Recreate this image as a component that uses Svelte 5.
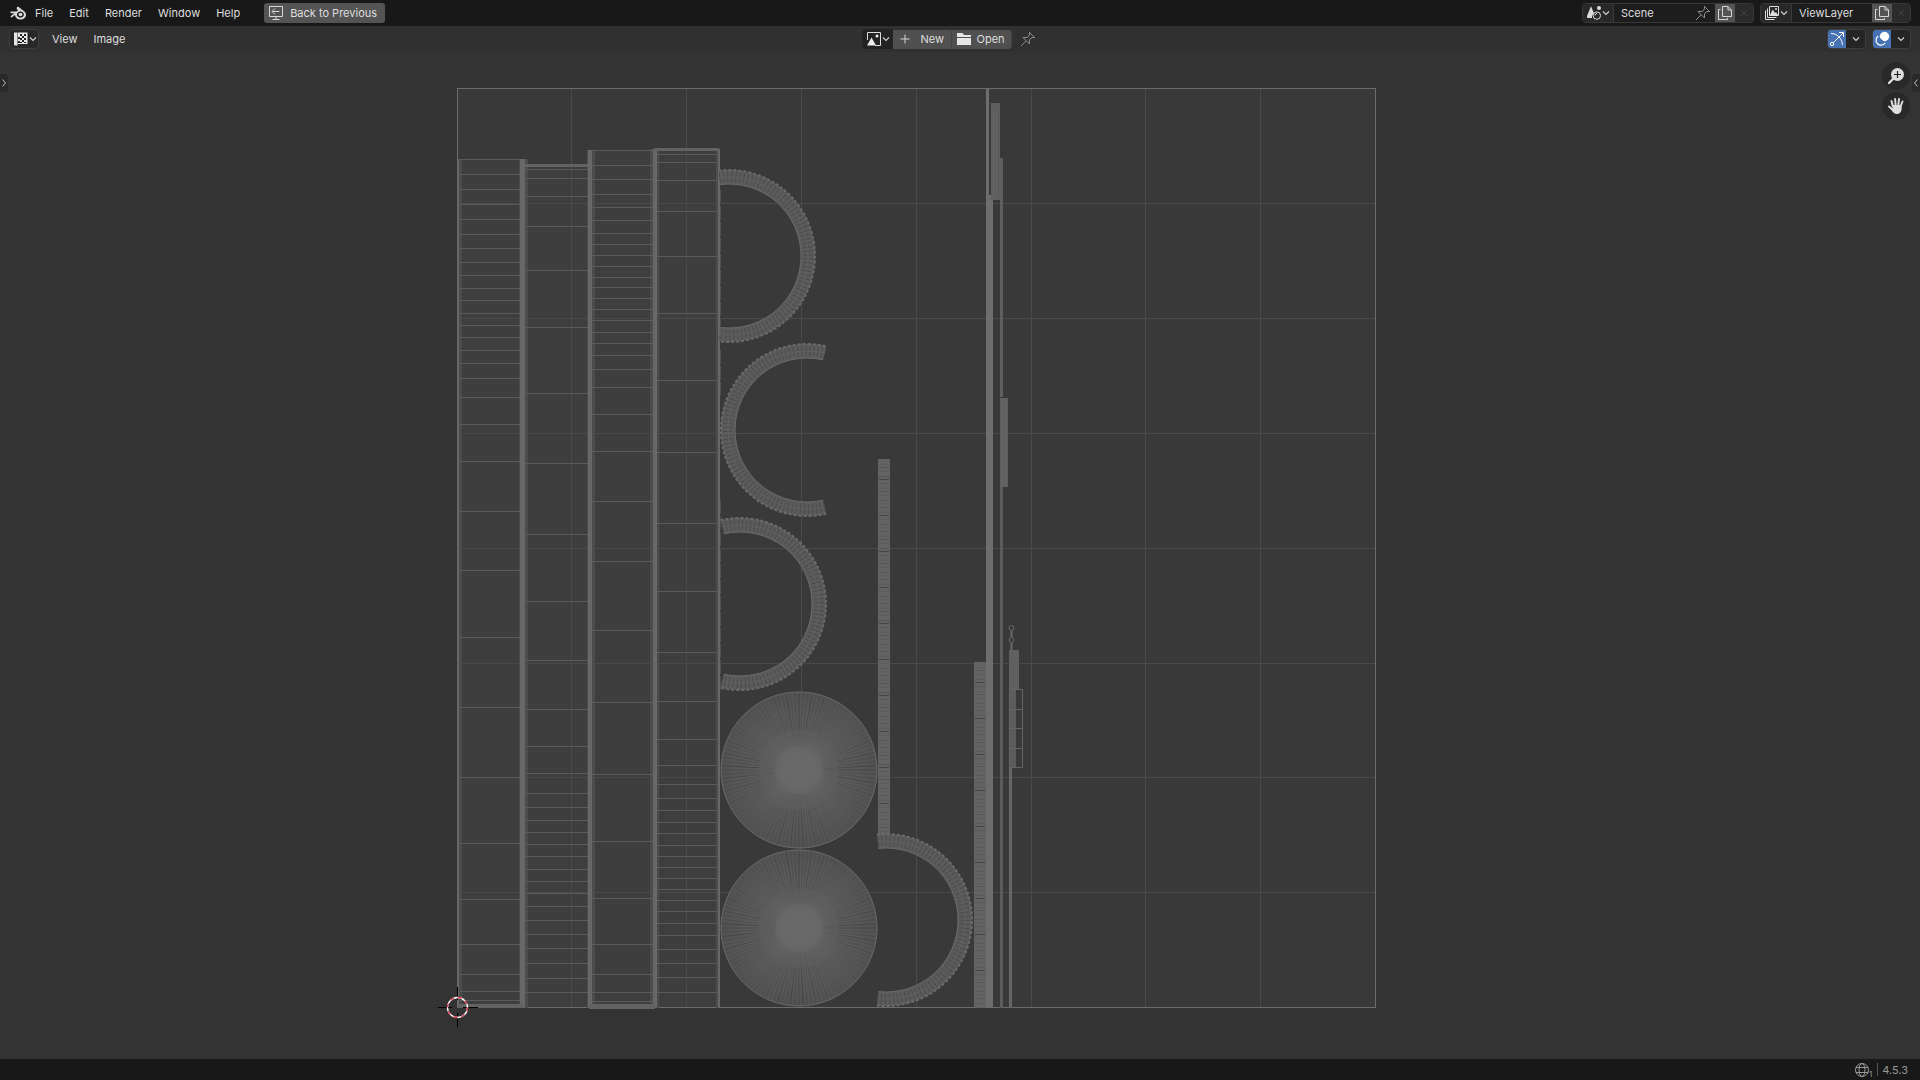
<script>
  const menus = ['File', 'Edit', 'Render', 'Window', 'Help'];

  const gridX = [571, 686, 801, 916, 1031, 1145, 1260];
  const gridY = [203, 318, 433, 548, 663, 777, 892];

  // Unwrapped wall strips with their horizontal edge loops.
  const strips = [
    { x: 458, w: 65, top: 159, rows: [159, 174, 189, 204, 219, 234, 248, 262, 275, 288, 300, 313, 325, 337, 350, 363, 378, 397, 424, 461, 511, 570, 637, 707, 777, 843, 899, 944, 974, 991, 1000] },
    { x: 521, w: 68, top: 164, rows: [169, 178, 196, 226, 270, 327, 393, 463, 534, 601, 660, 709, 746, 773, 793, 807, 820, 832, 844, 856, 869, 881, 893, 906, 920, 934, 948, 963, 978, 992] },
    { x: 589, w: 66, top: 150, rows: [150, 165, 179, 194, 207, 220, 233, 244, 255, 266, 277, 287, 298, 309, 320, 332, 343, 355, 369, 387, 414, 451, 501, 561, 630, 702, 774, 841, 898, 944, 974, 992, 1001] },
    { x: 654, w: 65, top: 149, rows: [154, 162, 180, 211, 256, 313, 380, 452, 523, 591, 652, 701, 739, 765, 784, 798, 810, 822, 833, 845, 856, 867, 878, 889, 900, 911, 923, 935, 949, 963, 977, 992] }
  ];

  // Vertical seams: soft band and bright core.
  const seams = [
    { x: 457, w: 5, y: 159, core: 457, coreW: 2 },
    { x: 519, w: 9, y: 159, core: 520, coreW: 5 },
    { x: 587, w: 8, y: 150, core: 588, coreW: 4 },
    { x: 650, w: 9, y: 149, core: 653, coreW: 4 },
    { x: 716, w: 4, y: 149, core: 718, coreW: 2 }
  ];

  const arcs = [
    { cx: 729, cy: 256, from: -97, to: 97 },
    { cx: 807, cy: 430, from: 77, to: 283 },
    { cx: 740, cy: 604, from: -103, to: 103 },
    { cx: 886, cy: 920, from: -96, to: 96 }
  ];

  function arcPath(a, r) {
    const f = (a.from * Math.PI) / 180;
    const t = (a.to * Math.PI) / 180;
    return `M${a.cx + r * Math.cos(f)} ${a.cy + r * Math.sin(f)}A${r} ${r} 0 1 1 ${a.cx + r * Math.cos(t)} ${a.cy + r * Math.sin(t)}`;
  }

  const discs = [{ cx: 799, cy: 770 }, { cx: 799, cy: 928 }];
  const spokes = Array.from({ length: 112 }, (_, i) => {
    const a = (i / 112) * Math.PI * 2;
    const near = Math.min(Math.abs(Math.sin(a)), Math.abs(Math.cos(a)));
    return { x: Math.cos(a), y: Math.sin(a), o: (0.5 - near * 0.5) * (i % 3 ? 0.6 : 1) };
  });

  function rungs(from, to) {
    const out = [];
    for (let y = from, i = 0; y < to; i++) {
      out.push({ y, dark: i % 9 === 4, bright: i % 2 === 1 });
      y += 3 + ((i * 7) % 3);
    }
    return out;
  }
  const ladders = [
    { x: 878, w: 12, y: 459, h: 375, rows: rungs(464, 832) },
    { x: 974, w: 12, y: 662, h: 346, rows: rungs(667, 1005) }
  ];

  let scene = $state('Scene');
  let layer = $state('ViewLayer');
</script>

{#snippet chevron()}
  <svg class="chev" viewBox="0 0 8 8" width="8" height="8" aria-hidden="true"><path d="M1 2.5 4 5.5 7 2.5" /></svg>
{/snippet}

{#snippet pin()}
  <svg class="line" viewBox="0 0 16 16" width="16" height="16" aria-hidden="true">
    <path d="M9 1 15 7M9.800 1.800 9 5 7 6.500 3 6.500 9.500 13 9.500 9 11 7 14.200 6.200M6 10 1 15" />
  </svg>
{/snippet}

{#snippet copy()}
  <svg class="line bright" viewBox="0 0 16 16" width="16" height="16" aria-hidden="true">
    <path d="M5.5 1.5H11L14.5 5V11.5H5.5ZM11 1.5V5H14.5M3.5 4.5H1.5V14.5H10.5V13" />
  </svg>
{/snippet}

{#snippet cross()}
  <svg class="line" viewBox="0 0 16 16" width="16" height="16" aria-hidden="true"><path d="M5 5 11 11M11 5 5 11" /></svg>
{/snippet}

<div class="app">
  <header class="topbar">
    <nav class="menus">
      <button class="logo" aria-label="Blender">
        <svg viewBox="0 0 16 14" width="16" height="14" aria-hidden="true">
          <path fill="#d8d8d8" fill-rule="evenodd" d="M7 1.2C7.5.7 8.2.7 8.7 1.1L13.8 5.1C15.2 6.2 16 7.3 16 8.8 16 11.7 13.5 13.6 10.4 13.6 7.3 13.6 5.1 11.6 4.9 9.1L2 11.2C1.2 11.8.1 10.9.9 10.1L4.3 7.2H1.1C0 7.2 0 5.6 1.1 5.6H6.2L8 4.4 6.9 3.1C6.5 2.5 6.5 1.7 7 1.2ZM10.4 5.5C8.4 5.5 6.9 6.9 6.9 8.6S8.4 11.7 10.4 11.7 13.9 10.3 13.9 8.6 12.4 5.5 10.4 5.5Z" />
          <ellipse cx="10.5" cy="8.5" rx="2" ry="1.8" fill="#d8d8d8" />
        </svg>
      </button>
      {#each menus as m}<button class="menu">{m}</button>{/each}
      <button class="back">
        <svg class="line bright" viewBox="0 0 16 16" width="16" height="16" aria-hidden="true">
          <path d="M1.5 1.5H14.5V11.5H1.5ZM8 11.5V14.5M4.5 14.5H11.5M11.5 6.5H4.5M7 3.5 4 6.5 7 9.5" />
        </svg>
        <span>Back to Previous</span>
      </button>
    </nav>
    <div class="right">
      <div class="group">
        <button class="drop" aria-label="Browse scene">
          <svg viewBox="0 0 16 16" width="16" height="16" aria-hidden="true">
            <path fill="#ddd" d="M5 1.2 8 8.5C6.5 9.3 5.8 11 6 13H2C.7 13 .8 11.400 1.200 10.500Z" />
            <circle cx="13" cy="3" r="2" fill="#ddd" />
            <circle cx="10.800" cy="10.600" r="3.700" fill="none" stroke="#ddd" />
            <path d="M9 10.500A2 2 0 0 1 11 8.500" fill="none" stroke="#ddd" />
          </svg>
          {@render chevron()}
        </button>
        <input class="scene" aria-label="Scene name" bind:value={scene} />
        <button class="pin" aria-label="Pin scene">{@render pin()}</button>
        <button class="new" aria-label="New scene">{@render copy()}</button>
        <button class="del" aria-label="Delete scene" disabled>{@render cross()}</button>
      </div>
      <div class="group">
        <button class="drop" aria-label="Browse view layer">
          <svg viewBox="0 0 16 16" width="16" height="16" aria-hidden="true">
            <path d="M5.500 1.500H14.500V10.500H5.500ZM3.500 3.500V12.500H12.500M1.500 5.500V14.500H10.500" fill="none" stroke="#ddd" />
            <path d="M6 10 8.700 4.500 11 8 12 7 14 10Z" fill="#ddd" /><circle cx="12" cy="4" r="1" fill="#ddd" />
          </svg>
          {@render chevron()}
        </button>
        <input class="layer" aria-label="View layer name" bind:value={layer} />
        <button class="new" aria-label="New view layer">{@render copy()}</button>
        <button class="del" aria-label="Delete view layer" disabled>{@render cross()}</button>
      </div>
    </div>
  </header>

  <div class="toolbar">
    <div class="tools">
      <button class="drop boxed" aria-label="Editor type">
        <svg viewBox="0 0 16 16" width="16" height="16" aria-hidden="true">
          <path fill="#e6e6e6" d="M1 1.500H4.500V14.500H2A1 1 0 0 1 1 13.500ZM5 1.500H14.500V13H5V12H7V10H5V8H7V6H5Z" />
          <path fill="#222" d="M7 3H9V5H7ZM11 3H13V5H11ZM9 5H11V7H9ZM7 7H9V9H7ZM11 7H13V9H11ZM9 9H11V11H9ZM11 11H13V12H11ZM7 11H9V12H7Z" />
        </svg>
        {@render chevron()}
      </button>
      <button class="menu">View</button>
      <button class="menu">Image</button>
    </div>
    <div class="center">
      <button class="drop boxed joined" aria-label="Browse image">
        <svg viewBox="0 0 16 16" width="16" height="16" aria-hidden="true">
          <path d="M9 14.500H14.500V1.500H1.500V9" fill="none" stroke="#ddd" />
          <path d="M1 14.500 5.500 6.500 10 14.500Z" fill="#eee" /><circle cx="11" cy="5" r="1.500" fill="#eee" />
        </svg>
        {@render chevron()}
      </button>
      <button class="action">
        <svg class="line bright" viewBox="0 0 16 16" width="16" height="16" aria-hidden="true"><path d="M3.500 8H12.500M8 3.500V12.500" /></svg>
        <span class="spaced">New</span>
      </button>
      <button class="action last">
        <svg viewBox="0 0 16 16" width="16" height="16" aria-hidden="true"><path fill="#e6e6e6" d="M1 2H6.500L8 4H15V6H1ZM1 7H15V14H1Z" /></svg>
        <span>Open</span>
      </button>
      <button class="pinfree" aria-label="Pin image">{@render pin()}</button>
    </div>
    <div class="toggles">
      <div class="pair">
        <button class="on" aria-label="Show gizmos">
          <svg viewBox="0 0 16 16" width="16" height="16" fill="none" stroke="#fff" aria-hidden="true">
            <path d="M2 2.500C8 2.500 13 7 13.500 14M4.500 11.500 14 2M10 1.500H14.500V6" /><circle cx="3" cy="13" r="1.700" />
          </svg>
        </button>
        <button class="more" aria-label="Gizmo options">{@render chevron()}</button>
      </div>
      <div class="pair">
        <button class="on" aria-label="Show overlays">
          <svg viewBox="0 0 16 16" width="16" height="16" aria-hidden="true">
            <circle cx="10.500" cy="5.500" r="4.700" fill="#fff" />
            <path d="M4.300 5A5 5 0 1 0 11.300 11.800" fill="none" stroke="#fff" stroke-width="1.200" />
            <path d="M6.500 7.500A3 3 0 0 0 9 10" fill="none" stroke="#4772b3" stroke-width="1.200" />
          </svg>
        </button>
        <button class="more" aria-label="Overlay options">{@render chevron()}</button>
      </div>
    </div>
  </div>

  <main class="editor">
    <svg class="canvas" viewBox="0 52 1920 1007" role="img" aria-label="UV layout">
      <defs>
        <radialGradient id="disc">
          <stop offset="0" stop-color="#6a6a6a" />
          <stop offset="0.240" stop-color="#686868" />
          <stop offset="0.400" stop-color="#606060" />
          <stop offset="1" stop-color="#525252" />
        </radialGradient>
      </defs>
      <rect x="457" y="88" width="919" height="920" fill="#393939" />
      {#each strips as s}
        <rect x={s.x} y={s.top} width={s.w} height={1008 - s.top} fill="#3e3e3e" />
      {/each}
      {#each gridX as x}<rect {x} y="89" width="1" height="919" fill="#4a4a4a" />{/each}
      {#each gridY as y}<rect x="458" {y} width="918" height="1" fill="#4a4a4a" />{/each}
      <rect x="457.500" y="88.500" width="918" height="919" fill="none" stroke="#6c6c6c" />

      {#each seams as s}
        <rect x={s.x} y={s.y} width={s.w} height={1008 - s.y} fill="#4c4c4c" />
      {/each}
      {#each strips as s}
        {#each s.rows as y}<rect x={s.x + 2} {y} width={s.w - 3} height="1" fill="#5b5b5b" />{/each}
      {/each}
      {#each seams as s}
        <rect x={s.core} y={s.y} width={s.coreW} height={1008 - s.y} fill="#686868" />
      {/each}
      <path d="M525 164H588V167H525ZM654 148H719V151H654ZM458 1004H523V1008H458ZM589 1004H655V1009H589Z" fill="#626262" />
      <path d="M720.500 190V326M720.500 350V395M720.500 500V690" stroke="#505050" stroke-dasharray="14 2" />

      {#each ladders as l}
        <rect x={l.x} y={l.y} width={l.w} height={l.h} fill="#636363" />
        {#each l.rows as r}<rect x={l.x + 1} y={r.y} width={l.w - 2} height="1" fill={r.dark ? '#444' : r.bright ? '#575757' : '#5c5c5c'} />{/each}
      {/each}

      {#each arcs as a}
        <path d={arcPath(a, 79)} fill="none" stroke="#5b5b5b" stroke-width="14" />
        <path d={arcPath(a, 79)} fill="none" stroke="#4c4c4c" stroke-width="10" stroke-dasharray="1 3" />
        <path d={arcPath(a, 79)} fill="none" stroke="#616161" stroke-width="1" />
        <path d={arcPath(a, 86)} fill="none" stroke="#6a6a6a" stroke-width="2" stroke-dasharray="3 2" />
        <path d={arcPath(a, 72)} fill="none" stroke="#6a6a6a" stroke-width="1" />
      {/each}

      {#each discs as d}
        <circle cx={d.cx} cy={d.cy} r="78" fill="url(#disc)" stroke="#6a6a6a" />
        {#each spokes as s}
          <line x1={d.cx + s.x * 40} y1={d.cy + s.y * 40} x2={d.cx + s.x * 77} y2={d.cy + s.y * 77} stroke="#333" stroke-opacity={s.o} />
          <line x1={d.cx + s.x * 24} y1={d.cy + s.y * 24} x2={d.cx + s.x * 40} y2={d.cy + s.y * 40} stroke="#333" stroke-opacity={s.o * 0.35} />
        {/each}
      {/each}

      <path d="M986 88H989V195H993V1008H986Z" fill="#6d6d6d" />
      <path d="M991 103H1000V158H1003V397H1000V200H991Z" fill="#5e5e5e" />
      <path d="M1000 487H1003V1008H1000Z" fill="#5c5c5c" />
      <rect x="1000" y="398" width="8" height="89" fill="#606060" />
      <path d="M990.500 103V195" stroke="#3c3c3c" />
      <path d="M993.500 112V198M996.500 112V198M1002.500 400V485M1005.500 400V485" stroke="#6a6a6a" stroke-opacity="0.600" />
      <g fill="none" stroke="#6a6a6a">
        <circle cx="1011.500" cy="628" r="2.500" /><circle cx="1011.500" cy="640" r="2.500" />
        <path d="M1011.500 631V637M1011.500 643V650" stroke-width="2" />
      </g>
      <rect x="1009" y="650" width="10" height="39" fill="#606060" />
      <rect x="1009" y="689" width="7" height="79" fill="#5c5c5c" />
      <path d="M1009.500 689.500H1022.500V767.500H1009.500ZM1009.500 709.500H1022M1009.500 728.500H1022M1009.500 748.500H1022" fill="none" stroke="#666" />
      <rect x="1009" y="768" width="3" height="240" fill="#666" />

      <g fill="none">
        <path d="M438 1007.500H452M463 1007.500H478M457.500 987V1000M457.500 1013V1027" stroke="#000" />
        <circle cx="457.500" cy="1007.500" r="10" stroke="#fff" stroke-width="1.300" />
        <circle cx="457.500" cy="1007.500" r="10" stroke="#dc3048" stroke-width="1.300" stroke-dasharray="3.927" />
      </g>
    </svg>

    <button class="side left" aria-label="Show toolbar"><svg viewBox="0 0 6 10" width="6" height="10" aria-hidden="true"><path d="M1.500 1.500 4.500 5 1.500 8.500" /></svg></button>
    <button class="side rightside" aria-label="Show sidebar"><svg viewBox="0 0 6 10" width="6" height="10" aria-hidden="true"><path d="M4.500 1.500 1.500 5 4.500 8.500" /></svg></button>
    <div class="gizmos">
      <button aria-label="Zoom">
        <svg viewBox="0 0 18 18" width="18" height="18" aria-hidden="true">
          <path d="M6.500 11.500 2 16" stroke="#ddd" stroke-width="2.400" stroke-linecap="round" />
          <circle cx="10.500" cy="7.500" r="6.500" fill="#ddd" /><path d="M7 7.500H14M10.500 4V11" stroke="#222" stroke-width="1.200" />
        </svg>
      </button>
      <button aria-label="Pan">
        <svg viewBox="0 0 18 18" width="18" height="18" aria-hidden="true">
          <g fill="none" stroke="#ddd" stroke-width="2" stroke-linecap="round">
            <path d="M5.800 9 4.500 4M8.600 8 8.100 2M11.300 8 12 2M13.700 9 15.500 4.500M2 9.500 6 13" />
          </g>
          <path fill="#ddd" d="M4.800 8H14.800L14.600 12C14.500 14.500 13 17 10 17 7.500 17 6 15.500 4.500 13L2.500 10.500 5.800 11Z" />
        </svg>
      </button>
    </div>
  </main>

  <footer class="status">
    <svg viewBox="0 0 20 18" width="20" height="18" fill="none" stroke="#999" aria-hidden="true">
      <circle cx="8" cy="9" r="6.500" /><ellipse cx="8" cy="9" rx="3" ry="6.500" /><path d="M2 6.500H14M2 11.500H14" />
    </svg>
    <small>1</small>
    <span class="bar"></span>
    <span>4.5.3</span>
  </footer>
</div>

<style>
  :global(body) { margin: 0; background: #303030; }
  .app {
    display: flex; flex-direction: column; min-height: 100vh;
    font: 11px/18px Inter, "Liberation Sans", sans-serif; color: #dedede; background: #333;
  }
  button, input {
    font: inherit; color: inherit; background: none; border: 0; padding: 0; margin: 0;
    box-sizing: border-box;
  }
  button { display: flex; align-items: center; flex: none; white-space: nowrap; }
  svg { display: block; flex: none; }
  .line { fill: none; stroke: #8c8c8c; }
  .line.bright { stroke: #d6d6d6; }
  .chev { fill: none; stroke: #cfcfcf; stroke-width: 1.200; }

  .topbar {
    display: flex; justify-content: space-between; align-items: center;
    height: 26px; padding: 0 9px; background: #181818;
  }
  .menus, .right, .tools, .center, .toggles, .pair { display: flex; align-items: center; }
  .logo { padding: 0 1px; }
  .menu { padding: 0 8px; height: 20px; }
  .back {
    gap: 6px; height: 20px; margin-left: 16px; padding: 0 8px 0 4px;
    background: #545454; border-radius: 3px;
  }
  .right { gap: 6px; }
  .group {
    display: flex; align-items: stretch; height: 20px; box-sizing: border-box;
    border: 1px solid #383838; border-radius: 4px; background: #1d1d1d; overflow: hidden;
  }
  .drop { width: 30px; justify-content: space-between; padding: 0 2px 0 3px; background: #282828; }
  .group .drop { width: 31px; border-right: 1px solid #3a3a3a; padding: 0 3px; }
  input { padding-left: 7px; min-width: 0; }
  .scene { width: 81px; }
  .layer { width: 80px; }
  .pin { width: 20px; }
  .new { width: 20px; justify-content: center; background: #545454; }
  .del { width: 18px; justify-content: center; background: #2b2b2b; }
  .del :global(.line) { stroke: #424242; }

  .toolbar {
    display: grid; grid-template-columns: 1fr auto 1fr; align-items: center;
    height: 26px; padding: 0 9px; background: #303030;
  }
  .boxed { height: 20px; border: 1px solid #3d3d3d; border-radius: 4px; background: #282828; }
  .tools .boxed { margin-right: 5px; }
  .center { padding-right: 23px; }
  .joined { width: 31px; border-color: #232323; border-radius: 4px 0 0 4px; background: #232323; }
  .action { width: 59px; height: 19px; padding: 0 4px; gap: 5px; background: #505050; border-right: 1px solid #444; }
  .action.last { border-radius: 0 4px 4px 0; width: 60px; }
  .spaced { padding-left: 3px; }
  .pinfree { padding-left: 8px; }
  .toggles { justify-content: flex-end; gap: 6px; }
  .pair { border: 1px solid #3d3d3d; border-radius: 4px; overflow: hidden; background: #252525; }
  .on { width: 18px; height: 18px; justify-content: center; background: #4772b3; }
  .more { width: 19px; height: 18px; justify-content: center; }

  .editor { position: relative; flex: 1; display: flex; min-height: 0; background: #333; }
  .canvas { width: 100%; height: auto; }
  .side {
    position: absolute; top: 22px; width: 8px; height: 18px; justify-content: center;
    background: #292929;
  }
  .side svg { fill: none; stroke: #bbb; }
  .left { left: 0; border-radius: 0 4px 4px 0; }
  .rightside { right: 0; border-radius: 4px 0 0 4px; }
  .gizmos { position: absolute; top: 10px; right: 10px; display: grid; gap: 2px; }
  .gizmos button { width: 28px; height: 28px; justify-content: center; border-radius: 50%; background: #292929; }

  .status {
    display: flex; align-items: center; justify-content: flex-end; height: 21px; padding: 0 12px;
    background: #181818; color: #999;
  }
  small { font-size: 8px; line-height: 8px; margin: 8px 5px 0 -5px; }
  .bar { width: 1px; height: 13px; margin-right: 4px; background: #555; }
</style>
